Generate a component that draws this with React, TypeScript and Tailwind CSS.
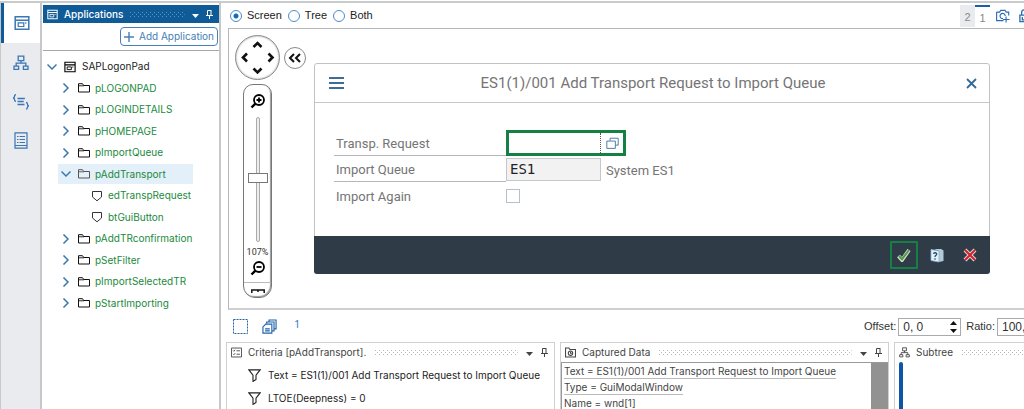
import type { ReactNode } from "react";

const ui = "font-['Inter','Liberation_Sans',sans-serif]";

function Svg({ size = 16, className = "", children, sw = 1.3 }: { size?: number; className?: string; children: ReactNode; sw?: number }) {
  return (
    <svg width={size} height={size} viewBox="0 0 16 16" fill="none" stroke="currentColor" strokeWidth={sw} className={`shrink-0 ${className}`} aria-hidden="true">
      {children}
    </svg>
  );
}

const AppIcon = ({ size = 16, className = "" }: { size?: number; className?: string }) => (
  <Svg size={size} className={className} sw={1.5}>
    <path d="M1.2 1.7h13.6v12.600H1.200zM1.200 5.200h13.600" />
    <path d="M4.200 7.900h5.600v3.600H4.200zM11.800 7.300v1.500" strokeWidth="1.200" />
  </Svg>
);

const HierarchyIcon = ({ size = 16, className = "" }: { size?: number; className?: string }) => (
  <Svg size={size} className={className}>
    <path d="M5.200 1.200h5.600v4.400H5.200zM8 5.600v2.600M3.200 11V8.200h9.600V11M1 11.200h4.600v3.200H1zM10.400 11.200H15v3.200h-4.600z" />
  </Svg>
);

const BracesIcon = () => (
  <svg width="18" height="16" viewBox="0 0 18 16" fill="none" stroke="currentColor" strokeWidth="1.300" aria-hidden="true">
    <path d="M4 .7C2.800.7 2.600 1.200 2.600 2.100S2.400 3.700 1.200 4c1.200.3 1.400.9 1.400 1.800S2.800 7.300 4 7.300M14 8.500c1.200 0 1.400.5 1.400 1.400s.2 1.600 1.400 1.900c-1.200.3-1.400.9-1.400 1.800s-.2 1.600-1.400 1.600M5.500 4.500h7.400M5.500 7.500h6.200M5.500 10.500h7" />
  </svg>
);

const ListIcon = () => (
  <svg width="14" height="17" viewBox="0 0 14 17" fill="none" stroke="currentColor" strokeWidth="1.200" aria-hidden="true">
    <path d="M1 .8h12v15.400H1zM3 4.500h1.500M5.500 4.500h5.500M3 7.500h1.500M5.500 7.500h5.500M3 10.500h1.500M5.500 10.500h5.500M1 13.500h12" />
  </svg>
);

const PinIcon = ({ className = "" }: { className?: string }) => (
  <svg width="7" height="9" viewBox="0 0 7 9" fill="none" stroke="currentColor" className={`shrink-0 ${className}`} aria-hidden="true">
    <path d="M1.500 5V.5h3.500M5 0v5M0 5.500h7M3.500 6v3" />
  </svg>
);

const CaretIcon = () => (
  <svg width="7" height="4" viewBox="0 0 7 4" fill="currentColor" className="shrink-0" aria-hidden="true">
    <path d="M0 0h7L3.500 4z" />
  </svg>
);

const FolderIcon = () => (
  <svg width="12" height="10" viewBox="0 0 12 10" fill="none" stroke="currentColor" className="shrink-0" aria-hidden="true">
    <path d="M.5 9V.7h4L5.700 2.500h5.800V9z" />
    <path d="M1 2.800h5" strokeWidth="0.900" />
  </svg>
);

const ShieldIcon = () => (
  <svg width="12" height="12" viewBox="0 0 12 12" fill="none" stroke="currentColor" className="shrink-0" aria-hidden="true">
    <path d="M1.500 1.500h9V7L6 10.800 1.500 7z" />
  </svg>
);

const ChevronIcon = ({ open }: { open?: boolean }) => (
  <svg width="10" height="10" viewBox="0 0 10 10" fill="none" stroke="currentColor" strokeWidth="1.500" className="shrink-0 text-[#3a78b0]" aria-hidden="true">
    {open ? <path d="M.5 2.500 5 7 9.500 2.500" /> : <path d="M2.500.5 7 5 2.500 9.500" />}
  </svg>
);

const FunnelIcon = () => (
  <svg width="13" height="13" viewBox="0 0 13 13" fill="none" stroke="currentColor" strokeWidth="1.100" className="shrink-0 text-[#222]" aria-hidden="true">
    <path d="M.9.900h11.200L8 6.200v4.300l-3 1.900V6.200z" />
  </svg>
);

const Dots = ({ light }: { light?: boolean }) => (
  <svg className={`h-[5px] min-w-0 flex-1 ${light ? "text-[#5d92c0]" : "text-[#b9b9b9]"}`} aria-hidden="true">
    <defs>
      <pattern id={light ? "grip-light" : "grip"} width="4" height="4" patternUnits="userSpaceOnUse">
        <path d="M0 0h1v1H0zM2 2h1v1H2z" fill="currentColor" />
      </pattern>
    </defs>
    <rect width="100%" height="5" fill={light ? "url(#grip-light)" : "url(#grip)"} />
  </svg>
);

type Node = { label: string; open?: boolean; selected?: boolean; leaf?: boolean };
const nodes: Node[] = [
  { label: "pLOGONPAD" },
  { label: "pLOGINDETAILS" },
  { label: "pHOMEPAGE" },
  { label: "pImportQueue" },
  { label: "pAddTransport", open: true, selected: true },
  { label: "edTranspRequest", leaf: true },
  { label: "btGuiButton", leaf: true },
  { label: "pAddTRconfirmation" },
  { label: "pSetFilter" },
  { label: "pImportSelectedTR" },
  { label: "pStartImporting" },
];

function Rail() {
  const item = "flex h-[39px] w-full items-center justify-center text-[#3b76b5]";
  return (
    <nav className="flex w-10 shrink-0 flex-col border-l border-[#c8c8c8] bg-[#e9ebee]">
      <button aria-label="Applications" className="flex h-10 w-full items-center justify-center border-l-[3px] border-[#0f5b9c] bg-white text-[#3b76b5]"><AppIcon size={16} /></button>
      <button aria-label="Hierarchy" className={item}><HierarchyIcon /></button>
      <button aria-label="Scripts" className={item}><BracesIcon /></button>
      <button aria-label="Documents" className={item}><ListIcon /></button>
    </nav>
  );
}

function Applications() {
  return (
    <aside className="mr-[7px] flex w-[181px] shrink-0 flex-col border-x-2 border-[#c6c8ca] bg-white pt-[2px] pl-px text-[10px]">
      <header className="flex h-[18px] shrink-0 items-center bg-[#0f5b98] pr-[6px] pl-[4px] text-white">
        <AppIcon size={11} />
        <h2 className="mr-[7px] ml-[6px] font-medium">Applications</h2>
        <Dots light />
        <span className="mt-[3px] mr-[7px] ml-[7px]"><CaretIcon /></span>
        <PinIcon />
      </header>
      <div className="flex h-7 shrink-0 items-center justify-end border-b border-[#a8a8a8] pr-px">
        <button className="flex h-[19px] items-center gap-[5px] rounded-[4px] border border-[#4580b8] px-[3px] text-[#4580b8]">
          <svg width="10" height="10" viewBox="0 0 10 10" stroke="currentColor" strokeWidth="1.400" aria-hidden="true"><path d="M5 0v10M0 5h10" /></svg>
          Add Application
        </button>
      </div>
      <ul role="tree" className="mt-[5px] grid h-[258px] shrink-0 auto-rows-fr">
        <li role="treeitem" className="flex items-center pl-[4px] text-[#222]">
          <ChevronIcon open />
          <AppIcon size={12} className="mr-[6px] ml-[7px] text-black" />
          SAPLogonPad
        </li>
        {nodes.map((n) => (
          <li key={n.label} role="treeitem" className={`flex items-center text-[#1a8a3c] ${n.leaf ? "pl-[48px]" : "pl-[15px]"}`}>
            {n.leaf ? (
              <>
                <span className="mr-[5px] text-[#333]"><ShieldIcon /></span>
                {n.label}
              </>
            ) : (
              <span className={`flex h-5 items-center pl-[3px] ${n.selected ? "w-[135px] bg-[#e3eff9]" : ""}`}>
                <ChevronIcon open={n.open} />
                <span className={`mr-[5px] ml-[7px] ${n.selected ? "text-[#555]" : "text-[#111]"}`}><FolderIcon /></span>
                {n.label}
              </span>
            )}
          </li>
        ))}
      </ul>
    </aside>
  );
}

function ViewBar() {
  return (
    <div className="flex h-[25px] shrink-0 items-center pl-[2px] font-['Liberation_Sans',sans-serif] text-[11px] text-[#222]">
      {["Screen", "Tree", "Both"].map((v) => (
        <label key={v} className="mr-[6px] flex items-center gap-[5px]">
          <input
            type="radio"
            name="view"
            defaultChecked={v === "Screen"}
            className="size-3 appearance-none rounded-full border border-[#4a8cc8] bg-white checked:bg-[radial-gradient(circle,#0f6cc0_0_2px,#fff_3px)]"
          />
          {v}
        </label>
      ))}
      <div className="ml-auto flex h-full items-start pt-[2px] text-[#888]">
        <button className="h-[22px] w-[15px] bg-[#e9ebee] pt-[2px]">2</button>
        <button className="h-[22px] w-[15px] border-t-2 border-[#1560a8] pt-[2px]">1</button>
      </div>
      <button aria-label="Capture" className="ml-[6px] text-[#2b6cb0]">
        <Svg size={14} sw={1.300}>
          <path d="M.7 3.500v9.800h7.800M.7 3.500h3.500l1.300-2h4.800l1.300 2h2.900v4M11.500 8.500v7M8 12h7.500" />
          <path d="M10.600 8a3 3 0 1 0-2.600 3" />
        </Svg>
      </button>
      <button aria-label="Lock" className="ml-[9px] w-[5px] overflow-hidden text-[#2b6cb0]">
        <Svg size={14} sw={1.500}>
          <path d="M1 7h13v7.500H1zM3 7V4a3.500 3 0 0 1 7 0v3M3.800 9v3.500h3" />
        </Svg>
      </button>
    </div>
  );
}

function Magnifier({ plus }: { plus?: boolean }) {
  return (
    <Svg size={16} sw={1.800} className="text-black">
      <circle cx="9" cy="7" r="5" />
      <path d={plus ? "M6.500 7h5M9 4.500v5" : "M6.500 7h5"} />
      <path d="M5.400 10.600 1.500 14.500" strokeWidth="2.400" />
    </Svg>
  );
}

function Canvas() {
  return (
    <section className="mb-px flex min-h-0 flex-1 border-t border-b-2 border-l border-[#b5b7ba] border-b-[#cfcfcf] pr-[34px]">
      <div className="flex w-[85px] shrink-0 flex-col pt-[6px] pl-[6px]">
        <div className="flex items-center gap-[4px]">
          <button aria-label="Pan" className="size-[45px] shrink-0 rounded-full border border-[#8a8a8a] shadow-[inset_0_0_2px_#999]">
            <svg viewBox="0 0 43 43" fill="none" stroke="#111" strokeWidth="2.600" aria-hidden="true">
              <path d="m17.500 11 4-4 4 4M17.500 32.500l4 4 4-4M11 17.500l-4 4 4 4M32.500 17.500l4 4-4 4" />
            </svg>
          </button>
          <button aria-label="Collapse" className="size-[22px] shrink-0 rounded-full border border-[#8a8a8a]">
            <svg viewBox="0 0 20 20" fill="none" stroke="#111" strokeWidth="2" aria-hidden="true"><path d="m9 6-4 4 4 4M15 6l-4 4 4 4" /></svg>
          </button>
        </div>
        <div className="mt-[4px] ml-[8px] flex w-[29px] flex-col items-center rounded-t-[10px] rounded-b-[12px] border border-[#777] pt-[8px] pb-[3px] shadow-[inset_-1px_-1px_1px_#999]">
          <button aria-label="Zoom in"><Magnifier plus /></button>
          <input
            type="range"
            aria-label="Zoom"
            defaultValue={49}
            className="mt-[8px] h-[125px] w-5 appearance-none bg-transparent [writing-mode:vertical-lr] [&::-webkit-slider-runnable-track]:w-[4px] [&::-webkit-slider-runnable-track]:rounded-[2px] [&::-webkit-slider-runnable-track]:border [&::-webkit-slider-runnable-track]:border-[#aaa] [&::-webkit-slider-runnable-track]:bg-[#eee] [&::-webkit-slider-thumb]:-ml-[9px] [&::-webkit-slider-thumb]:h-[10px] [&::-webkit-slider-thumb]:w-5 [&::-webkit-slider-thumb]:appearance-none [&::-webkit-slider-thumb]:border [&::-webkit-slider-thumb]:border-[#777] [&::-webkit-slider-thumb]:bg-white"
          />
          <span className="mt-[4px] font-['Roboto',sans-serif] text-[9px] leading-[12px] text-[#333]">107%</span>
          <button aria-label="Zoom out" className="mt-[2px]"><Magnifier /></button>
          <hr className="mt-[6px] w-full border-[#bbb]" />
          <svg width="14" height="5" viewBox="0 0 14 5" fill="none" stroke="#111" strokeWidth="1.500" className="mt-[6px]" aria-hidden="true"><path d="M.8 4V1h12.400v3M7 1v2" /></svg>
        </div>
      </div>
      <Dialog />
    </section>
  );
}

function Dialog() {
  const label = "flex h-[26px] w-[172px] items-end border-b border-[#b5b8bb] pb-[3px] pl-[2px]";
  return (
    <div role="dialog" aria-label="Add Transport Request" className="mt-[34px] flex h-[211px] min-w-0 flex-1 flex-col rounded-[3px] border border-[#c0c3c6] font-['Roboto',sans-serif] text-[13px] leading-[16px] text-[#757575]">
      <header className="flex h-[39px] shrink-0 items-center border-b border-[#c6c8ca] px-[14px]">
        <button aria-label="Menu" className="text-[#3f6d94]">
          <svg width="15" height="12" viewBox="0 0 15 12" stroke="currentColor" strokeWidth="2" aria-hidden="true"><path d="M0 1h15M0 6h15M0 11h15" /></svg>
        </button>
        <h1 className="flex-1 text-center text-[15px]">ES1(1)/001 Add Transport Request to Import Queue</h1>
        <button aria-label="Close" className="-mr-[2px] flex w-[15px] justify-end text-[#356a95]">
          <svg width="11" height="11" viewBox="0 0 11 11" stroke="currentColor" strokeWidth="1.800" aria-hidden="true"><path d="m1 1 9 9M10 1l-9 9" /></svg>
        </button>
      </header>
      <div className="flex-1 pt-[27px] pl-[19px]">
        <div className="flex h-[26px]">
          <label htmlFor="request" className={label}>Transp. Request</label>
          <div className="flex w-[120px] border-[3px] border-[#158043]">
            <input id="request" className="w-[92px] border-r border-dotted border-[#555] bg-white px-1 outline-none" />
            <button aria-label="Browse" className="flex flex-1 items-center justify-center text-[#4a7ba3]">
              <Svg size={13} sw={1.200}><path d="M5 4.500V1.500h10v8.500h-3M1 5h10.500v9H1z" /></Svg>
            </button>
          </div>
        </div>
        <div className="flex h-[26px]">
          <label htmlFor="queue" className={label}>Import Queue</label>
          <input id="queue" readOnly value="ES1" className="mt-[2px] h-[23px] w-[95px] border border-[#c5c7c9] bg-[#f2f2f2] px-[3px] pb-[2px] font-['DejaVu_Sans_Mono',monospace] text-[14px] text-[#222] outline-none" />
          <span className="flex items-end pb-[3px] pl-[5px]">System ES1</span>
        </div>
        <div className="flex h-[26px]">
          <label htmlFor="again" className="flex w-[172px] items-end pb-[3px] pl-[2px]">Import Again</label>
          <input id="again" type="checkbox" className="mt-[7px] size-[14px] appearance-none border border-[#b4c0cc] bg-white" />
        </div>
      </div>
      <footer className="-mx-px -mb-px flex h-[38px] shrink-0 items-center justify-end rounded-b-[3px] bg-[#2f3c48] pr-[13px]">
        <button aria-label="Confirm" className="flex size-7 items-center justify-center border-2 border-[#158043]">
          <svg width="14" height="14" viewBox="0 0 14 14" fill="none" aria-hidden="true">
            <path d="m1.500 8 3.500 4L12 2" stroke="#d8dcd4" strokeWidth="3.800" />
            <path d="m2 8 3 3.200L12 2" stroke="#4d9b45" strokeWidth="2" />
          </svg>
        </button>
        <button aria-label="Help" className="ml-[12px]">
          <svg width="14" height="15" viewBox="0 0 14 15" aria-hidden="true">
            <path d="M4 1h7l2.500 1.500V13L9 14V3z" fill="#b3c9d8" />
            <path d="M1 1.500 9 3v11l-8-1.500z" fill="#e3f1fb" stroke="#8ab4d2" strokeWidth=".8" />
            <path d="M3.500 5.800c.3-1.600 3.400-1.300 3.200.4C6.600 7.300 5 7.500 5 9M5 10.300v1.400" stroke="#2d4c66" strokeWidth="1.300" fill="none" />
          </svg>
        </button>
        <button aria-label="Cancel" className="ml-[19px]">
          <svg width="14" height="14" viewBox="0 0 14 14" aria-hidden="true">
            <path d="m2 2 10 10M12 2 2 12" stroke="#e2dada" strokeWidth="4" />
            <path d="m2 2 10 10M12 2 2 12" stroke="#d2232e" strokeWidth="2.200" />
          </svg>
        </button>
      </footer>
    </div>
  );
}

function Toolbar() {
  return (
    <div className="flex h-[31px] shrink-0 items-center overflow-hidden pl-[5px] font-['Liberation_Sans',sans-serif] text-[11px] text-[#333]">
      <button aria-label="Select area" className="text-[#1f63a8]">
        <svg width="15" height="15" viewBox="0 0 15 15" fill="none" stroke="currentColor" strokeDasharray="2 1" aria-hidden="true"><rect x=".5" y=".5" width="14" height="14" /></svg>
      </button>
      <button aria-label="Copy pages" className="ml-[14px] text-[#1f63a8]">
        <Svg size={15} sw={1.200}>
          <path d="M4 5.500h6.500V15H1V8.500zM3.300 10.500h5M3.300 12.700h5" />
          <path d="M5 5V3.200h7.800v9.500h-2M7.500 3V1H15v9.500h-2" />
        </Svg>
      </button>
      <span className="mb-[4px] ml-[17px] font-['Noto_Sans',sans-serif] text-[#3b7fc4]">1</span>
      <label htmlFor="offset" className="mr-[2px] ml-auto">Offset:</label>
      <div className="flex h-[18px] w-[63px] shrink-0 items-center border border-[#a9abae]">
        <input id="offset" defaultValue="0, 0" className="w-[51px] bg-white pl-[4px] text-[12px] leading-[14px] outline-none" />
        <svg width="7" height="12" viewBox="0 0 7 12" fill="#111" aria-hidden="true"><path d="M0 4h7L3.500 0zM0 8h7l-3.500 4z" /></svg>
      </div>
      <label htmlFor="ratio" className="mr-[2px] ml-[5px]">Ratio:</label>
      <input id="ratio" defaultValue="100, 100" className="h-[18px] w-[27px] shrink-0 border border-r-0 border-[#a9abae] bg-white pl-[4px] text-[12px] leading-[14px] outline-none" />
    </div>
  );
}

function Panel({ icon, title, className, children, controls = true }: { icon: ReactNode; title: string; className: string; children: ReactNode; controls?: boolean }) {
  return (
    <section className={`flex min-w-0 flex-col overflow-hidden border border-b-0 border-[#d0d0d0] ${className}`}>
      <header className="flex h-[19px] shrink-0 items-center pl-[4px] text-[#444]">
        {icon}
        <h2 className="mr-[9px] ml-[6px] whitespace-nowrap">{title}</h2>
        <Dots />
        {controls && (
          <>
            <span className="mt-[3px] mr-[8px] ml-[8px]"><CaretIcon /></span>
            <PinIcon className="mr-[6px]" />
          </>
        )}
      </header>
      {children}
    </section>
  );
}

export default function App() {
  return (
    <div className={`flex h-screen flex-col overflow-hidden bg-white pt-px ${ui}`}>
      <div className="flex min-h-0 flex-1 border-t-2 border-[#c9cbcd]">
        <Rail />
        <Applications />
        <main className="flex min-w-0 flex-1 flex-col">
          <ViewBar />
          <Canvas />
          <Toolbar />
          <div className="-ml-[2px] flex h-[67px] shrink-0 gap-[5px] text-[10px]">
            <Panel
              className="w-[329px] shrink-0"
              title="Criteria [pAddTransport]."
              icon={<Svg size={11} sw={1.300}><path d="M.7 1.500h14.600v13H.7zM3 5l1.200 1.200L6 4M8 5.500h5M3 10l1.200 1.200L6 9M8 10.500h5" /></Svg>}
            >
              <ul className="flex flex-col pt-[2px] pl-[21px] text-[#222]">
                {["Text = ES1(1)/001 Add Transport Request to Import Queue", "LTOE(Deepness) = 0"].map((t) => (
                  <li key={t} className="flex h-[23px] items-center gap-[7px] whitespace-nowrap"><FunnelIcon />{t}</li>
                ))}
              </ul>
            </Panel>
            <Panel
              className="w-[329px] shrink-0"
              title="Captured Data"
              icon={<Svg size={11} sw={1.500}><path d="M.8 1.500h5L7 3.500h8.200v11H.8z" /><circle cx="8" cy="9" r="3.200" /><path d="M8 7v2h2" /></Svg>}
            >
              <div className="flex min-h-0 flex-1 border-t border-l border-[#999]">
                <ul className="flex-1 pl-[2px] leading-[14px] text-[#444]">
                  {["Text = ES1(1)/001 Add Transport Request to Import Queue", "Type = GuiModalWindow", "Name = wnd[1]"].map((t) => (
                    <li key={t} className="w-fit border-b border-[#bbb] pt-px whitespace-nowrap">{t}</li>
                  ))}
                </ul>
                <div className="w-[17px] bg-[#929292]" />
              </div>
            </Panel>
            <Panel className="flex-1 border-r-0" title="Subtree" controls={false} icon={<HierarchyIcon size={11} />}>
              <div className="ml-[4px] w-[4px] flex-1 rounded-t-[2px] bg-[#0f55a5]" />
            </Panel>
          </div>
        </main>
      </div>
    </div>
  );
}
